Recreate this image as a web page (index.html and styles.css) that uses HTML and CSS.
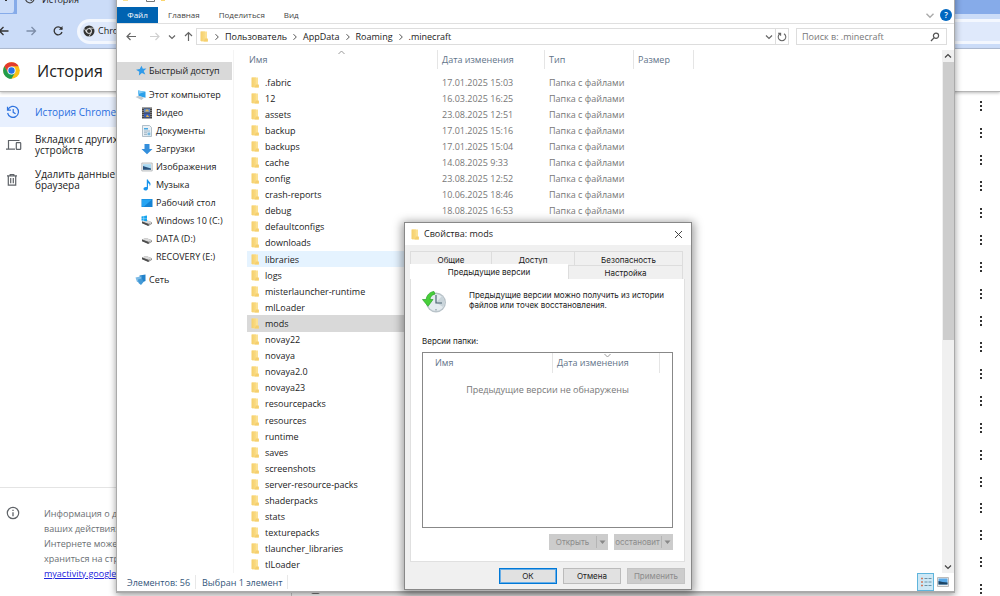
FILE: index.html
```html
<!DOCTYPE html>
<html lang="ru">
<head>
<meta charset="utf-8">
<title>История</title>
<link rel="stylesheet" href="styles.css">
</head>
<body>
<svg class="defs" aria-hidden="true">
  <defs>
    <linearGradient id="gold" x1="0" x2="1"><stop offset="0" stop-color="#f5cf6b"/><stop offset="1" stop-color="#fadc85"/></linearGradient>
    <symbol id="folder" viewBox="0 0 8 11"><path d="M1 0.500h6v7.500h.8v2.500H1z" fill="#fbe193"/><path d="M.5.500h4.500v9.500H.5z" fill="url(#gold)"/><path d="M5 7.500h2.800v3H3.500z" fill="#f5cf6e"/></symbol>
    <symbol id="drive" viewBox="0 0 12 10"><path d="M1 4.500L5 3l6 2.200v1.600L7.500 9 1 6z" fill="#8b8b8b"/><path d="M1 4.500L5 3l6 2.200-3.500 1.600z" fill="#d9d9d9"/><path d="M1 4.600l6.500 2.300V9L1 6.200z" fill="#4c4c4c"/><path d="M8.400 7.200l1.500-.8" stroke="#fff" stroke-width=".6"/></symbol>
    <symbol id="right" viewBox="0 0 6 8"><path d="M1.500 1.200L4.300 4 1.500 6.800" fill="none" stroke="#555"/></symbol>
    <symbol id="down" viewBox="0 0 8 6"><path d="M1 1.500l3 3 3-3" fill="none" stroke="currentColor" stroke-width="1.2"/></symbol>
  </defs>
</svg>

<main class="browser">
  <div class="tabstrip">
    <div class="tab-search"><svg width="12" height="8" viewBox="0 0 12 8"><path d="M3 2l3 3 3-3" fill="none" stroke="#333"/></svg></div>
    <div class="tab"><svg width="12" height="12" viewBox="0 0 12 12"><path d="M2 3.500a4.300 4.300 0 1 0 4-2.300M6 3.500v3l2 1" fill="none" stroke="#444" stroke-width="1.200"/></svg><span>История</span></div>
  </div>
  <div class="toolbar">
    <button class="tool" aria-label="Назад"><svg width="12" height="12" viewBox="0 0 12 12"><path d="M10.500 6H1.500M5.500 2l-4 4 4 4" fill="none" stroke="#333" stroke-width="1.300"/></svg></button>
    <button class="tool" aria-label="Вперёд"><svg width="12" height="12" viewBox="0 0 12 12"><path d="M1.500 6h9M6.500 2l4 4-4 4" fill="none" stroke="#7d8da8" stroke-width="1.300"/></svg></button>
    <button class="tool" aria-label="Обновить"><svg width="12" height="12" viewBox="0 0 12 12"><path d="M10 7a4 4 0 1 1-.8-3.800L10.300 4.300" fill="none" stroke="#333" stroke-width="1.300"/><path d="M10.500 1v3.800H6.800z" fill="#333"/></svg></button>
    <div class="omnibox"><svg width="12" height="12" viewBox="0 0 12 12"><circle cx="6" cy="6" r="5.500" fill="#333"/><circle cx="6" cy="6" r="2.800" fill="#fff"/><circle cx="6" cy="6" r="2" fill="#333"/><path d="M6 3.200h5M3.600 7.400L1.200 3.400M8.400 7.400L6 11.500" stroke="#fff" stroke-width=".7"/></svg><span>Chrome</span></div>
  </div>
  <header class="page-head">
    <svg width="17" height="17" viewBox="0 0 17 17"><circle cx="8.500" cy="8.500" r="8.300" fill="#fbc116"/><path d="M1.300 4.350A8.300 8.300 0 0 1 15.700 4.350H8.500L4.900 10.500z" fill="#e33b2e"/><path d="M1.300 4.350L5 10.600 8.500 12.500 12.100 10.600 8.500 16.800A8.300 8.300 0 0 1 1.300 4.350z" fill="#229c4c"/><circle cx="8.500" cy="8.500" r="4.100" fill="#fff"/><circle cx="8.500" cy="8.500" r="3.200" fill="#2673e8"/></svg>
    <h1>История</h1>
  </header>
  <div class="page">
    <aside class="menu">
      <a class="menu-item current" href="#"><svg width="14" height="14" viewBox="0 0 14 14"><path d="M2 4.500A5.500 5.500 0 1 1 1.600 8M1.500 1.800v3.400h3.400M7.200 4v3.300l2.400 1.400" fill="none" stroke="#2f74e0" stroke-width="1.200"/></svg><span>История Chrome</span></a>
      <a class="menu-item" href="#"><svg width="16" height="12" viewBox="0 0 16 12"><path d="M13.500 1.500H2.500v8M0 10.200h9" fill="none" stroke="#5f6368" stroke-width="1.200"/><rect x="10.300" y="3.600" width="4.400" height="6.800" rx=".6" fill="none" stroke="#5f6368" stroke-width="1.200"/></svg><span>Вкладки с других<br>устройств</span></a>
      <a class="menu-item" href="#"><svg width="12" height="14" viewBox="0 0 12 14"><path d="M1 2.800h10M4.200 2.500V1.500h3.600v1M2.300 3v9.200h7.400V3M4.700 5v5.200M7.300 5v5.200" fill="none" stroke="#5f6368" stroke-width="1.200"/></svg><span>Удалить данные<br>браузера</span></a>
      <div class="notice">
        <svg width="14" height="14" viewBox="0 0 14 14"><circle cx="7" cy="7" r="5.700" fill="none" stroke="#5f6368" stroke-width="1.200"/><path d="M7 6.200v4M7 3.800v1.300" stroke="#5f6368" stroke-width="1.300"/></svg>
        <p>Информация о д<br>ваших действиях<br>Интернете може<br>храниться на стр<br><a href="#">myactivity.google</a></p>
      </div>
    </aside>
    <div class="history"><label class="visit"><input type="checkbox" aria-label="Выбрать запись"></label></div>
    <div class="dots">
      <i></i><i></i><i></i><i></i><i></i><i></i><i></i><i></i><i></i><i></i><i></i><i></i><i></i><i></i><i></i><i></i><i></i><i></i><i></i>
    </div>
  </div>
</main>

<section class="explorer" aria-label=".minecraft">
  <div class="titlebar"><svg width="60" height="10" viewBox="0 0 60 10"><path d="M1 1h5v7H1z" fill="#fbe08f"/><path d="M24.500 2v6.500h8V2" fill="none" stroke="#777"/><path d="M39 1h4v7h-4z" fill="#fbd56e"/></svg></div>
  <nav class="ribbon">
    <button class="file">Файл</button><button>Главная</button><button>Поделиться</button><button>Вид</button>
    <div class="ribbon-end"><svg class="pale" width="10" height="7"><use href="#down"/></svg><button class="help" aria-label="Справка">?</button></div>
  </nav>
  <div class="address">
    <div class="arrows">
      <svg width="11" height="9" viewBox="0 0 11 9"><path d="M10 4.500H1M4.500 1L1 4.500 4.500 8" fill="none" stroke="#666" stroke-width="1.200"/></svg>
      <svg width="11" height="9" viewBox="0 0 11 9"><path d="M1 4.500h9M6.500 1L10 4.500 6.500 8" fill="none" stroke="#d0d0d0" stroke-width="1.200"/></svg>
      <svg class="grey" width="8" height="6"><use href="#down"/></svg>
      <svg width="9" height="11" viewBox="0 0 9 11"><path d="M4.500 10V1.500M1 5l3.500-3.500L8 5" fill="none" stroke="#666" stroke-width="1.200"/></svg>
    </div>
    <div class="path">
      <svg width="8" height="11"><use href="#folder"/></svg>
      <svg class="first" width="6" height="8"><use href="#right"/></svg><span>Пользователь</span>
      <svg width="6" height="8"><use href="#right"/></svg><span>AppData</span>
      <svg width="6" height="8"><use href="#right"/></svg><span>Roaming</span>
      <svg width="6" height="8"><use href="#right"/></svg><span>.minecraft</span>
      <svg class="grey open" width="8" height="6"><use href="#down"/></svg>
      <button class="reload" aria-label="Обновить"><svg width="10" height="10" viewBox="0 0 10 10"><path d="M7 1.700a3.800 3.800 0 1 1-4 0M1 1.200h2.600v2.600" fill="none" stroke="#666" stroke-width="1.100"/></svg></button>
    </div>
    <label class="search"><input type="text" placeholder="Поиск в: .minecraft" aria-label="Поиск"><svg width="10" height="10" viewBox="0 0 10 10"><circle cx="6" cy="3.800" r="2.600" fill="none" stroke="#555" stroke-width="1.200"/><path d="M4.200 5.600L1 9" stroke="#555" stroke-width="1.300"/></svg></label>
  </div>
  <div class="panes">
    <nav class="tree">
      <a class="root chosen" href="#"><svg width="12" height="12" viewBox="0 0 12 12"><path d="M6.500.8l1.300 3 3.600-.3-2.700 2.600 1.600 3.500-3.400-1.700-3 2.700.4-3.800L1 4.700l3.800-.6z" fill="#2f9bea"/></svg>Быстрый доступ</a>
      <a class="root" href="#"><svg width="12" height="12" viewBox="0 0 12 12"><path d="M3 1.500l7.500 1.300v6L3.600 7z" fill="#2ba0ea"/><path d="M3 1.500l7.500 1.300-6.400 2z" fill="#7fcaf6"/><path d="M.5 8l3-1.200 5.500 2L6.500 11z" fill="#c3c9ce"/></svg>Этот компьютер</a>
      <a href="#"><svg width="12" height="12" viewBox="0 0 12 12"><path d="M1 .5h10v11H1z" fill="#444"/><path d="M3 1.500h6v4H3z" fill="#5f86c9"/><path d="M3 6.500h6v4H3z" fill="#3a5db5"/><path d="M5 2.500h2l1 2H4zM6 7.500l2.500 2.500H5z" fill="#e0b34d"/><path d="M2 1v10M10 1v10" stroke="#bbb" stroke-dasharray="1 1"/></svg>Видео</a>
      <a href="#"><svg width="12" height="12" viewBox="0 0 12 12"><path d="M1.500.5h7l2 2v9h-9z" fill="#e9f0f5" stroke="#9fb0bd" stroke-width=".8"/><path d="M3 3h4v1.500H3z" fill="#49a7e0"/><path d="M3 6h6M3 7.800h3M3 9.600h3" stroke="#8ba3b5" stroke-width=".8"/><path d="M6.500 7.500h2.800v2.800H6.500z" fill="#79b9de"/></svg>Документы</a>
      <a href="#"><svg width="12" height="12" viewBox="0 0 12 12"><path d="M3.500 1h5v5h3L6 11.200.5 6h3z" fill="#348fdc"/></svg>Загрузки</a>
      <a href="#"><svg width="12" height="12" viewBox="0 0 12 12"><path d="M.8 2h10.400v8H.8z" fill="#eee" stroke="#a4a9ad" stroke-width=".7"/><path d="M2 3.200h8v5.600H2z" fill="#a9d9f3"/><path d="M2 5l3 1 5 1.500v1.300H2z" fill="#28517c"/></svg>Изображения</a>
      <a href="#"><svg width="12" height="12" viewBox="0 0 12 12"><path d="M5.800.5h1.200c.2 2 2.700 2.200 2.500 4.800-.1 1-.5 1.500-.9 2 .3-2-.6-2.700-1.600-3v4.900c0 1.600-1.400 2.300-2.600 2.300S2.500 10.700 2.500 9.800c0-1.300 1.600-2.200 3.300-1.700z" fill="#1693ec"/></svg>Музыка</a>
      <a href="#"><svg width="12" height="12" viewBox="0 0 12 12"><path d="M.5 2h11v8H.5z" fill="#1583d4"/><path d="M1 2.500h10L3 9.500H1z" fill="#27a5f3"/></svg>Рабочий стол</a>
      <a href="#"><svg width="12" height="12" viewBox="0 0 12 12"><use href="#drive" y="2" width="12" height="10"/><path d="M.5 1.400l2.200-.4v2.200H.5zM3.100.9L6 .5v2.700H3.100zM.5 3.600h2.200v2.200l-2.200-.4zM3.100 3.600H6v2.700l-2.900-.4z" fill="#16a4ee"/></svg>Windows 10 (C:)</a>
      <a href="#"><svg width="12" height="12" viewBox="0 0 12 12"><use href="#drive" y="2" width="12" height="10"/></svg>DATA (D:)</a>
      <a href="#"><svg width="12" height="12" viewBox="0 0 12 12"><use href="#drive" y="2" width="12" height="10"/></svg>RECOVERY (E:)</a>
      <a class="root" href="#"><svg width="12" height="12" viewBox="0 0 12 12"><path d="M4.500 1.500l6-1v6.500l-5 2z" fill="#2383cb"/><path d="M.5 3.500l6-1.200v6L2 8z" fill="#7dbbe6"/><path d="M3 5.500l4-1 1.500 3.500L6 11 3.500 9z" fill="#4399d6"/></svg>Сеть</a>
    </nav>
    <div class="listing">
      <table class="files">
        <colgroup><col class="c-name"><col class="c-date"><col class="c-type"><col class="c-size"></colgroup>
        <thead><tr><th><div>Имя<svg class="sort" width="7" height="5" viewBox="0 0 7 5"><path d="M.5 4l3-3 3 3" fill="none" stroke="#999"/></svg></div></th><th><div>Дата изменения</div></th><th><div>Тип</div></th><th><div>Размер</div></th></tr></thead>
        <tbody>
          <tr><td><svg><use href="#folder"/></svg>.fabric</td><td>17.01.2025 15:03</td><td>Папка с файлами</td></tr>
          <tr><td><svg><use href="#folder"/></svg>12</td><td>16.03.2025 16:25</td><td>Папка с файлами</td></tr>
          <tr><td><svg><use href="#folder"/></svg>assets</td><td>23.08.2025 12:51</td><td>Папка с файлами</td></tr>
          <tr><td><svg><use href="#folder"/></svg>backup</td><td>17.01.2025 15:16</td><td>Папка с файлами</td></tr>
          <tr><td><svg><use href="#folder"/></svg>backups</td><td>17.01.2025 15:04</td><td>Папка с файлами</td></tr>
          <tr><td><svg><use href="#folder"/></svg>cache</td><td>14.08.2025 9:33</td><td>Папка с файлами</td></tr>
          <tr><td><svg><use href="#folder"/></svg>config</td><td>23.08.2025 12:52</td><td>Папка с файлами</td></tr>
          <tr><td><svg><use href="#folder"/></svg>crash-reports</td><td>10.06.2025 18:46</td><td>Папка с файлами</td></tr>
          <tr><td><svg><use href="#folder"/></svg>debug</td><td>18.08.2025 16:53</td><td>Папка с файлами</td></tr>
          <tr><td colspan="3"><svg><use href="#folder"/></svg>defaultconfigs</td></tr>
          <tr><td colspan="3"><svg><use href="#folder"/></svg>downloads</td></tr>
          <tr class="hover"><td colspan="3"><svg><use href="#folder"/></svg>libraries</td></tr>
          <tr><td colspan="3"><svg><use href="#folder"/></svg>logs</td></tr>
          <tr><td colspan="3"><svg><use href="#folder"/></svg>misterlauncher-runtime</td></tr>
          <tr><td colspan="3"><svg><use href="#folder"/></svg>mlLoader</td></tr>
          <tr class="selected"><td colspan="3"><svg><use href="#folder"/></svg>mods</td></tr>
          <tr><td colspan="3"><svg><use href="#folder"/></svg>novay22</td></tr>
          <tr><td colspan="3"><svg><use href="#folder"/></svg>novaya</td></tr>
          <tr><td colspan="3"><svg><use href="#folder"/></svg>novaya2.0</td></tr>
          <tr><td colspan="3"><svg><use href="#folder"/></svg>novaya23</td></tr>
          <tr><td colspan="3"><svg><use href="#folder"/></svg>resourcepacks</td></tr>
          <tr><td colspan="3"><svg><use href="#folder"/></svg>resources</td></tr>
          <tr><td colspan="3"><svg><use href="#folder"/></svg>runtime</td></tr>
          <tr><td colspan="3"><svg><use href="#folder"/></svg>saves</td></tr>
          <tr><td colspan="3"><svg><use href="#folder"/></svg>screenshots</td></tr>
          <tr><td colspan="3"><svg><use href="#folder"/></svg>server-resource-packs</td></tr>
          <tr><td colspan="3"><svg><use href="#folder"/></svg>shaderpacks</td></tr>
          <tr><td colspan="3"><svg><use href="#folder"/></svg>stats</td></tr>
          <tr><td colspan="3"><svg><use href="#folder"/></svg>texturepacks</td></tr>
          <tr><td colspan="3"><svg><use href="#folder"/></svg>tlauncher_libraries</td></tr>
          <tr><td colspan="3"><svg><use href="#folder"/></svg>tlLoader</td></tr>
        </tbody>
      </table>
    </div>
    <div class="scrollbar"><svg class="flip" width="8" height="6"><use href="#down"/></svg><div class="thumb"></div><div class="rest"></div><svg width="8" height="6"><use href="#down"/></svg></div>
  </div>
  <footer class="status">
    <span>Элементов: 56</span><span>Выбран 1 элемент</span>
    <div class="views">
      <button class="on" aria-label="Таблица"><svg width="12" height="10" viewBox="0 0 12 10"><path d="M1 1.500h2M1 5h2M1 8.500h2" stroke="#d0795d" stroke-width="1.400"/><path d="M4.500 1.500h3M4.500 5h3M4.500 8.500h3M8.500 1.500h3M8.500 5h3M8.500 8.500h3" stroke="#6c93a6"/></svg></button>
      <button aria-label="Значки"><svg width="12" height="10" viewBox="0 0 12 10"><path d="M.5.500h11v9H.5z" fill="#eee" stroke="#bbb"/><path d="M1.500 1.500h9v6h-9z" fill="#58a9e8"/><path d="M1.500 4l4 1 5 .5v2h-9z" fill="#1d4464"/></svg></button>
    </div>
  </footer>
</section>

<section class="dialog" role="dialog" aria-label="Свойства: mods">
  <header class="dialog-title"><svg width="8" height="11"><use href="#folder"/></svg><span>Свойства: mods</span><button aria-label="Закрыть"><svg width="9" height="9" viewBox="0 0 9 9"><path d="M1 1l7 7M8 1L1 8" stroke="#444"/></svg></button></header>
  <div class="dialog-body">
    <div class="tabs-back"><button>Общие</button><button>Доступ</button><button>Безопасность</button></div>
    <div class="tabs-front"><button class="active">Предыдущие версии</button><button>Настройка</button></div>
    <div class="sheet">
      <div class="intro">
        <svg width="24" height="24" viewBox="0 0 24 24"><circle cx="14" cy="12.500" r="10" fill="#b9c3c9"/><circle cx="14" cy="12.500" r="8.600" fill="#e4ebef"/><path d="M14 12.500L20 6a8.600 8.600 0 0 1 1 11z" fill="#c9d4da"/><path d="M14 5v8h6" fill="none" stroke="#4d6573" stroke-width="1.200"/><path d="M14 19v1.500M8 13H6.500" stroke="#7b8b94"/><path d="M12 1.500C7.500 2 4.500 5.500 4.200 9.500H.5l5.500 6.800 5-6.800H8c.2-2.500 1.500-4.500 5-5.500z" fill="#48cf3a" stroke="#2aa32a" stroke-width=".7"/></svg>
        <p>Предыдущие версии можно получить из истории<br>файлов или точек восстановления.</p>
      </div>
      <div class="caption">Версии папки:</div>
      <div class="versions">
        <div class="versions-head"><span>Имя</span><span>Дата изменения<svg class="sort" width="7" height="5" viewBox="0 0 7 5"><path d="M.5 1l3 3 3-3" fill="none" stroke="#999"/></svg></span></div>
        <p>Предыдущие версии не обнаружены</p>
      </div>
      <div class="split-row">
        <button class="split" disabled><span>Открыть</span><i><svg width="7" height="5" viewBox="0 0 7 5"><path d="M.5.500h6l-3 3.500z" fill="#888"/></svg></i></button>
        <button class="split" disabled><span>осстановит</span><i><svg width="7" height="5" viewBox="0 0 7 5"><path d="M.5.500h6l-3 3.500z" fill="#888"/></svg></i></button>
      </div>
    </div>
    <div class="actions"><button class="default">ОК</button><button>Отмена</button><button disabled>Применить</button></div>
  </div>
</section>
</body>
</html>
```

FILE: styles.css
```css
* { box-sizing: border-box; }
body { margin: 0; height: 100vh; overflow: hidden; position: relative; font: 9px/12px "Open Sans", "Noto Sans", sans-serif; color: #222; background: #fff; }
svg { display: block; flex: none; }
button { font: inherit; color: inherit; border: 0; background: none; padding: 0; margin: 0; }
a { color: inherit; text-decoration: none; }
p { margin: 0; }
.defs { position: absolute; width: 0; height: 0; }

/* browser */
.browser { position: absolute; inset: -12px 0 0; isolation: isolate; display: flex; flex-direction: column; }
.tabstrip { height: 26px; background: #86abe9; display: flex; }
.tab-search { width: 17px; background: #cbdcf8; border-radius: 0 0 5px 0; border-right: 3px solid #86abe9; border-bottom: 1px solid #86abe9; padding-top: 8px; }
.tab { width: 300px; background: #cbdcf8; display: flex; gap: 6px; padding: 5px 7px 0; }
.tab span { line-height: 14px; }
.toolbar { height: 35px; background: #cbdcf8; border-bottom: 1px solid #a9b9d3; display: flex; align-items: center; gap: 15px; }
.tool { width: 12px; }
.tool:first-child { margin-left: -2px; }
.omnibox { flex: 1; height: 25px; margin: 0 -20px 0 -2px; border-radius: 13px; background: #dfe9fb; border: 3px solid #f3f7fe; display: flex; align-items: center; gap: 3px; padding-left: 3px; font-weight: 500; }
.page-head { height: 43px; flex: none; background: #fff; border-bottom: 1px solid #b5b5b5; box-shadow: 0 1px 3px #bbb; display: flex; align-items: center; gap: 17px; padding-left: 3px; z-index: 1; }
.page-head h1 { margin: 0; padding-top: 1px; font-size: 16px; line-height: 22px; font-weight: 500; }
.page { flex: 1; display: flex; min-height: 0; background: #fff; }
.menu { width: 290px; display: flex; flex-direction: column; padding-top: 5px; }
.menu-item { display: grid; grid-template-columns: 29px 1fr; align-items: center; min-height: 30px; padding-left: 6px; margin-bottom: 3px; font: 500 10px/11px "Open Sans", "Noto Sans", sans-serif; }
.menu-item + .menu-item { margin-bottom: 5px; }
.menu-item.current { background: #e8f0fe; color: #2a6fdf; }
.notice { margin-top: auto; height: 109px; border-top: 1px solid #e4e4e4; padding: 18px 6px 0; display: grid; grid-template-columns: 38px 1fr; line-height: 15px; color: #6b6f73; }
.notice a { color: #2222dd; text-decoration: underline; }
.history { flex: 1; display: flex; align-items: flex-end; padding: 0 0 0 1px; }
.visit { flex: 1; border-left: 1px solid #ccc; height: 20px; padding: 8px 0 0 18px; }
.visit input { display: block; margin: 0; width: 11px; height: 10px; }
.dots { width: 38px; display: flex; flex-direction: column; justify-content: space-between; align-items: center; padding: 9px 0 2px; }
.dots i { width: 2px; height: 10px; background: repeating-linear-gradient(#333 0 2px, transparent 2px 4px); }

/* file manager */
.explorer { position: absolute; left: 117px; right: 46px; top: -14px; bottom: 4px; background: #fff; border-bottom: 1px solid #aaa; box-shadow: 0 0 0 1px #aaa, 0 2px 7px 1px rgba(0,0,0,.4); display: flex; flex-direction: column; }
.titlebar { height: 21px; padding: 7px 0 0 5px; }
.ribbon { height: 17px; border-bottom: 1px solid #e0e0e0; display: flex; align-items: center; gap: 19px; font-size: 8px; color: #444; }
.ribbon .file { align-self: stretch; width: 41px; margin-right: -9px; background: #0063b1; color: #fff; }
.ribbon-end { margin-left: auto; display: flex; align-items: center; gap: 5px; padding-right: 2px; }
.pale { color: #aaa; }
.grey { color: #666; }
.ribbon .help { width: 12px; height: 12px; border-radius: 50%; background: #0067c0; color: #fff; line-height: 12px; font-weight: 600; }
.address { display: flex; padding: 4px 7px 5px 9px; height: 26px; align-items: stretch; }
.arrows { width: 70px; display: flex; align-items: center; gap: 12px; }
.arrows .grey { margin: 0 -4px; }
.path { flex: 1; border: 1px solid #ddd; display: flex; align-items: center; gap: 5px; padding-left: 3px; }
.path .first { margin-left: 1px; }
.path .open { margin-left: auto; }
.path .reload { margin-left: -3px; border-left: 1px solid #ddd; height: 100%; padding: 0 1px; }
.search { width: 151px; margin-left: 7px; border: 1px solid #ddd; display: flex; align-items: center; padding: 0 6px 0 5px; }
.search input { flex: 1; min-width: 0; border: 0; padding: 0; background: none; font: inherit; outline: 0; }
.search input::placeholder { color: #777; }
.panes { flex: 1; display: flex; min-height: 0; }
.tree { width: 117px; border-right: 1px solid #f4f4f4; padding-top: 12px; }
.tree a { height: 18px; display: flex; align-items: center; gap: 3px; padding-left: 24px; white-space: nowrap; }
.tree .root { padding-left: 18px; gap: 2px; margin-bottom: 6px; }
.tree .chosen { background: #d9d9d9; margin-right: 1px; }
.tree .root:nth-child(2) { margin-bottom: 0; }
.tree .root:last-child { margin-top: 5px; }
.listing { flex: 1; padding-left: 13px; }
.files { width: 447px; height: 100%; table-layout: fixed; border-collapse: collapse; }
.c-name { width: 191px; } .c-date { width: 107px; } .c-type { width: 89px; } .c-size { width: 60px; }
.files th { height: 24px; padding: 0 0 5px; font-weight: 400; text-align: left; color: #5f7489; }
.files th div { border-right: 1px solid #e5e5e5; height: 19px; line-height: 20px; padding-left: 4px; position: relative; }
.files th:first-child div { padding-left: 2px; }
.sort { position: absolute; left: 48%; top: 0; }
.files td { padding: 1px 0 0 4px; line-height: 12px; color: #777; white-space: nowrap; }
.files td:first-child { color: #222; }
.files td svg { width: 8px; height: 11px; display: inline-block; vertical-align: top; margin-right: 6px; }
.hover td { background: #e5f3ff; }
.selected td { background: #d9d9d9; }
.scrollbar { width: 12px; background: #f0f0f0; color: #444; display: flex; flex-direction: column; align-items: center; gap: 3px; padding: 3px 0; }
.flip { transform: rotate(180deg); }
.thumb { flex: 281; width: 11px; background: #cdcdcd; }
.rest { flex: 221; }
.status { height: 18px; display: flex; align-items: center; padding-left: 10px; color: #33557a; }
.status span { padding: 2px 5px 0 0; margin-right: 6px; border-right: 1px solid #e8e8e8; }
.views { margin-left: auto; display: flex; align-self: stretch; padding-right: 3px; }
.views button { width: 17px; display: grid; place-items: center; }
.views .on { background: #cde8f6; border: 1px solid #5fb5dc; }

/* properties dialog */
.dialog { position: absolute; left: 404px; top: 222px; width: 288px; background: #f0f0f0; border: 1px solid #888; box-shadow: 0 2px 9px 2px rgba(0,0,0,.4); font: 8px/10px "Inter", "Liberation Sans", sans-serif; }
.dialog-title { height: 22px; background: #fff; display: flex; align-items: center; padding: 0 8px 0 6px; gap: 5px; font: 9px/12px "Open Sans", "Noto Sans", sans-serif; }
.dialog-title button { margin-left: auto; }
.dialog-body { padding: 6px 6px 5px 5px; }
.tabs-back { display: grid; grid-template-columns: 81px 83px 1fr; margin: 0 2px 0 1px; }
.tabs-back button { height: 14px; border: 1px solid #ddd; border-bottom: 0; margin-left: -1px; padding-top: 2px; }
.tabs-front { display: grid; grid-template-columns: 158px 1fr; align-items: end; margin: -1px 2px 0 0; }
.tabs-front button { height: 14px; border: 1px solid #ddd; border-bottom: 0; }
.tabs-front .active { height: 15px; background: #fff; border: 0; position: relative; }
.sheet { background: #fff; border: 1px solid #e0e0e0; border-top: 0; padding: 11px; }
.intro { display: flex; gap: 23px; height: 45px; }
.caption { line-height: 12px; margin-bottom: 5px; }
.versions { height: 176px; border: 1px solid #888; font: 9px/12px "Open Sans", "Noto Sans", sans-serif; color: #777; text-align: center; }
.versions-head { display: grid; grid-template-columns: 130px 107px; text-align: left; height: 19px; line-height: 20px; color: #5f7489; margin-bottom: 12px; }
.versions-head span { border-right: 1px solid #e5e5e5; padding-left: 12px; position: relative; }
.versions-head span + span { padding-left: 4px; }
.split-row { display: flex; justify-content: flex-end; gap: 6px; padding-top: 6px; }
.split { width: 59px; height: 16px; background: #ccc; color: #8b8b8b; display: flex; align-items: center; overflow: hidden; }
.split span { flex: 1; text-align: center; overflow: hidden; }
.split i { width: 12px; height: 12px; border-left: 1px solid #b5b5b5; display: grid; place-items: center; }
.actions { display: flex; justify-content: flex-end; gap: 6px; margin-top: 6px; }
.actions button { width: 58px; height: 16px; background: #e1e1e1; border: 1px solid #bbb; }
.actions .default { border: 1px solid #0078d7; box-shadow: inset 0 0 0 1px #69aee6; }
.actions button:disabled { background: #ccc; border-color: #c4c4c4; color: #8b8b8b; }
```
